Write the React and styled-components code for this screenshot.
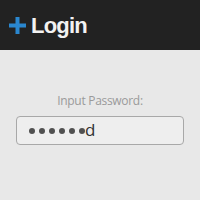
import React from "react";
import styled, { createGlobalStyle } from "styled-components";

const Global = createGlobalStyle`
  html, body { margin: 0; padding: 0; background: #e8e8e8; }
  body { font-family: "Liberation Sans", Arial, sans-serif; }
`;

const Page = styled.div`
  width: 200px;
  height: 200px;
  background: #e8e8e8;
  display: flex;
  flex-direction: column;
`;

const Header = styled.header`
  height: 50px;
  background: #222222;
  display: flex;
  align-items: center;
  padding-left: 9px;
  gap: 5px;
  box-sizing: border-box;
`;

const Title = styled.h1`
  margin: 0;
  font-size: 22px;
  font-weight: bold;
  letter-spacing: -0.8px;
  color: #f2f2f2;
  line-height: 1;
  padding-top: 2px;
`;

const Body = styled.main`
  display: flex;
  flex-direction: column;
  align-items: center;
  padding-top: 44px;
`;

const Label = styled.label`
  font-family: "Open Sans", "Liberation Sans", sans-serif;
  font-size: 12px;
  color: #9a9a9a;
  line-height: 14px;
  margin-bottom: 8px;
  letter-spacing: -0.3px;
`;

const Field = styled.div`
  width: 168px;
  height: 29px;
  box-sizing: border-box;
  border: 1px solid #a8a8a8;
  border-radius: 4px;
  background: #eeeeee;
  display: flex;
  align-items: center;
  padding-left: 12px;
  gap: 4px;
`;

const Dot = styled.span`
  width: 6px;
  height: 6px;
  border-radius: 50%;
  background: #505050;
`;

const Char = styled.span`
  font-family: "Open Sans", "Liberation Sans", sans-serif;
  font-size: 17px;
  color: #333333;
  line-height: 1;
  margin-left: -4px;
  margin-top: -3px;
`;

function Plus() {
  return (
    <svg width="17" height="17" viewBox="0 0 17 17">
      <rect x="6.5" y="0" width="4" height="17" fill="#2a87cf" />
      <rect x="0" y="6.5" width="17" height="4" fill="#2a87cf" />
    </svg>
  );
}

export default function App() {
  return (
    <>
      <Global />
      <Page>
        <Header>
          <Plus />
          <Title>Login</Title>
        </Header>
        <Body>
          <Label>Input Password:</Label>
          <Field>
            {[0, 1, 2, 3, 4, 5].map((i) => (
              <Dot key={i} />
            ))}
            <Char>d</Char>
          </Field>
        </Body>
      </Page>
    </>
  );
}
